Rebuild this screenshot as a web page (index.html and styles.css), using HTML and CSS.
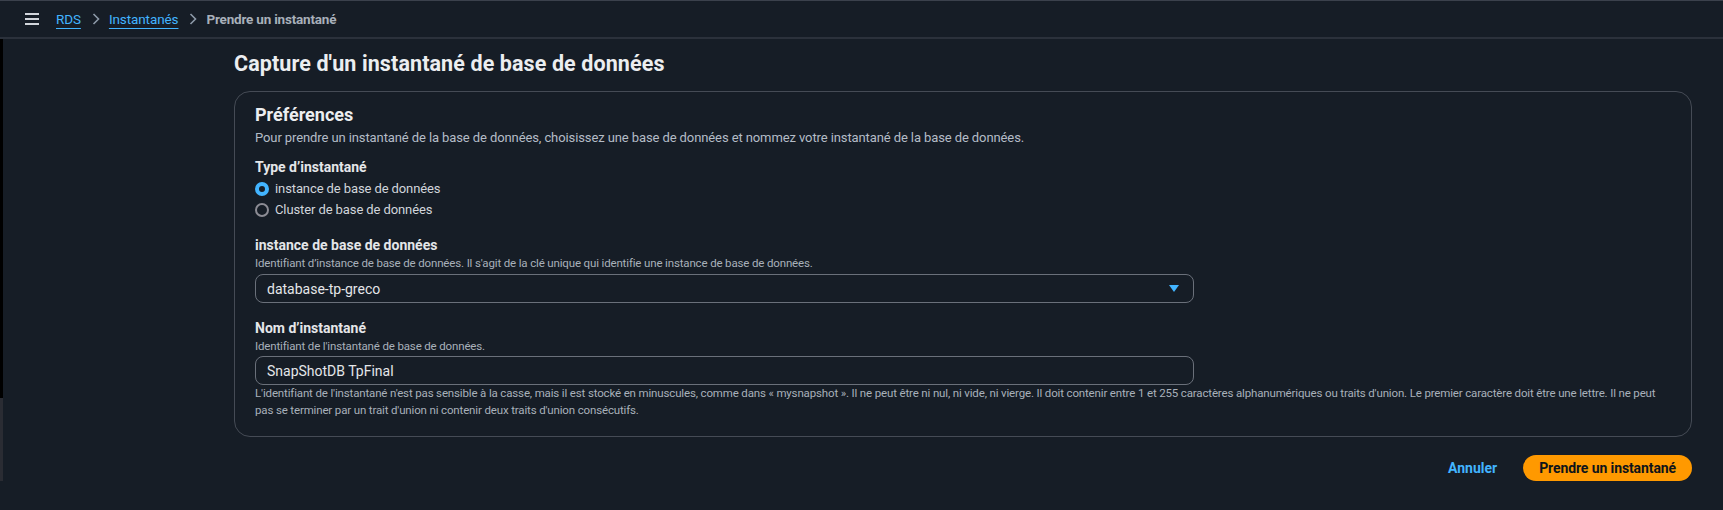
FILE: index.html
```html
<!DOCTYPE html>
<html lang="fr">
<head>
<meta charset="utf-8">
<title>Prendre un instantané</title>
<link rel="stylesheet" href="styles.css">
</head>
<body>
<header class="topbar">
  <svg class="burger" width="14" height="12" viewBox="0 0 14 12"><rect x="0" y="0" width="14" height="2" fill="#d1d5db"/><rect x="0" y="5" width="14" height="2" fill="#d1d5db"/><rect x="0" y="10" width="14" height="2" fill="#d1d5db"/></svg>
  <nav class="crumbs">
    <a class="crumb-link">RDS</a>
    <svg class="chev" width="8" height="12" viewBox="0 0 8 12"><path d="M1.5 1 L6.5 6 L1.5 11" fill="none" stroke="#8d99a8" stroke-width="1.6"/></svg>
    <a class="crumb-link">Instantanés</a>
    <svg class="chev" width="8" height="12" viewBox="0 0 8 12"><path d="M1.5 1 L6.5 6 L1.5 11" fill="none" stroke="#8d99a8" stroke-width="1.6"/></svg>
    <span class="crumb-current">Prendre un instantané</span>
  </nav>
</header>
<div class="page">
  <div class="rail"><div class="rail-top"></div><div class="rail-bottom"></div></div>
  <main class="main">
    <h1 class="title">Capture d'un instantané de base de données</h1>
    <section class="card">
      <h2 class="card-title">Préférences</h2>
      <p class="card-desc">Pour prendre un instantané de la base de données, choisissez une base de données et nommez votre instantané de la base de données.</p>

      <div class="field">
        <div class="label">Type d’instantané</div>
        <div class="radios">
          <label class="radio"><span class="dot checked"></span><span>instance de base de données</span></label>
          <label class="radio"><span class="dot"></span><span>Cluster de base de données</span></label>
        </div>
      </div>

      <div class="field spaced">
        <div class="label">instance de base de données</div>
        <div class="hint">Identifiant d’instance de base de données. Il s'agit de la clé unique qui identifie une instance de base de données.</div>
        <div class="select">
          <span>database-tp-greco</span>
          <svg width="10" height="7" viewBox="0 0 10 7"><path d="M0 0 H10 L5 7 Z" fill="#42b4ff"/></svg>
        </div>
      </div>

      <div class="field spaced">
        <div class="label">Nom d’instantané</div>
        <div class="hint">Identifiant de l'instantané de base de données.</div>
        <div class="input">SnapShotDB TpFinal</div>
        <div class="constraint">L'identifiant de l'instantané n'est pas sensible à la casse, mais il est stocké en minuscules, comme dans « mysnapshot ». Il ne peut être ni nul, ni vide, ni vierge. Il doit contenir entre 1 et 255 caractères alphanumériques ou traits d'union. Le premier caractère doit être une lettre. Il ne peut pas se terminer par un trait d'union ni contenir deux traits d'union consécutifs.</div>
      </div>
    </section>
    <div class="actions">
      <a class="cancel">Annuler</a>
      <button class="primary">Prendre un instantané</button>
    </div>
  </main>
</div>
</body>
</html>
```

FILE: styles.css
```css
* { box-sizing: border-box; }
html, body { margin: 0; padding: 0; }
body {
  background: #161d26;
  color: #d1d5db;
  font-family: Roboto, "Liberation Sans", sans-serif;
  font-size: 13px;
  letter-spacing: -0.1px;
  height: 510px;
  overflow: hidden;
}
.topbar {
  height: 39px;
  border-top: 1px solid #3b414c;
  border-bottom: 2px solid #2b313b;
  display: flex;
  align-items: center;
  padding-left: 25px;
}
.burger { display: block; margin-right: 17px; }
.crumbs { display: flex; align-items: center; font-size: 13.5px; letter-spacing: -0.1px; }
.crumb-link {
  color: #42b4ff;
  text-decoration: underline;
  text-underline-offset: 4px;
  text-decoration-thickness: 1px;
}
.chev { margin: 0 9px 0 11px; }
.crumb-current { color: #a8b0ba; font-weight: 700; letter-spacing: -0.2px; }

.page { display: flex; }
.rail { width: 3px; display: flex; flex-direction: column; }
.rail-top { height: 359px; background: #000; }
.rail-bottom { flex: 1; height: 112px; background: #2a2c33; }
.main { flex: 1; padding: 0 31px 0 231px; }
.title {
  margin: 10px 0 12px;
  font-size: 21.5px;
  letter-spacing: 0.1px;
  line-height: 30px;
  font-weight: 700;
  color: #eceef0;
}
.card {
  border: 1px solid #454b55;
  border-radius: 16px;
  padding: 12px 20px 17px;
}
.card-title {
  margin: 0;
  font-size: 18px;
  letter-spacing: 0;
  line-height: 22px;
  font-weight: 700;
  color: #eceef0;
}
.card-desc {
  margin: 2px 0 9px;
  line-height: 20px;
  color: #b4bcc6;
}
.field { display: flex; flex-direction: column; }
.field.spaced { margin-top: 15px; }
.label { font-weight: 700; font-size: 14px; letter-spacing: 0; line-height: 20px; color: #e4e6e9; }
.radios { display: flex; flex-direction: column; gap: 1px; margin-top: 2px; }
.radio { display: flex; align-items: center; gap: 6px; line-height: 20px; color: #d1d5db; }
.dot {
  width: 14px; height: 14px; border-radius: 50%;
  border: 2px solid #8c8c94;
  flex: none;
}
.dot.checked { border: 4.5px solid #42b4ff; background: #161d26; }
.hint { font-size: 11.5px; letter-spacing: -0.15px; line-height: 16px; color: #a8b0ba; }
.select, .input {
  width: 939px;
  height: 29px;
  border: 1px solid #6a707a;
  border-radius: 8px;
  display: flex;
  align-items: center;
  justify-content: space-between;
  padding: 0 14px 0 11px;
  color: #e4e6e9;
  font-size: 14px;
  letter-spacing: 0;
}
.select { margin-top: 3px; }
.input { margin-top: 2px; }
.constraint {
  margin-top: 0;
  font-size: 11.5px;
  letter-spacing: -0.15px;
  line-height: 17px;
  color: #a8b0ba;
}
.actions {
  display: flex;
  justify-content: flex-end;
  align-items: center;
  gap: 26px;
  margin-top: 18px;
}
.cancel { color: #42b4ff; font-weight: 700; font-size: 14px; letter-spacing: 0; }
.primary {
  background: #ff9900;
  color: #0f141a;
  border: none;
  border-radius: 20px;
  height: 26px;
  padding: 0 16px;
  font-family: inherit;
  font-size: 14px;
  font-weight: 700;
  letter-spacing: -0.1px;
}
```
